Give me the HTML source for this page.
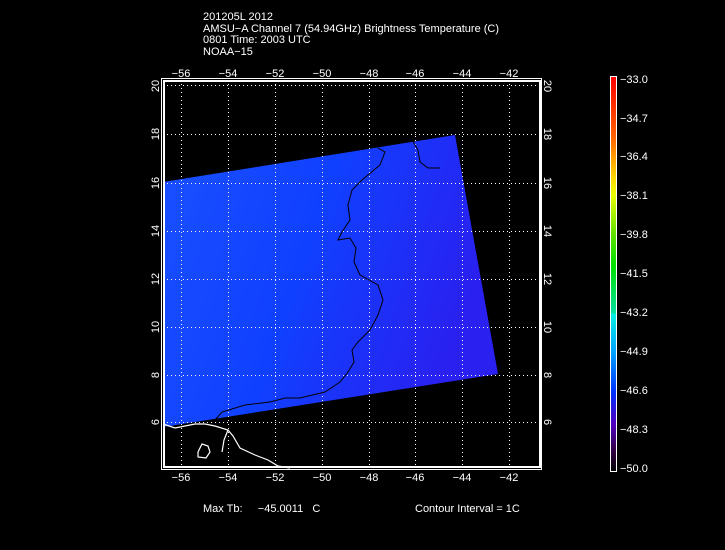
<!DOCTYPE html>
<html><head><style>
html,body{margin:0;padding:0;background:#000;}
body{width:725px;height:550px;position:relative;overflow:hidden;font-family:"Liberation Sans",sans-serif;color:#fff;}
.t{position:absolute;left:203px;font-size:11px;line-height:11px;white-space:pre;}
</style></head><body>
<div class="t" style="top:12px">201205L 2012</div>
<div class="t" style="top:23.5px">AMSU−A Channel 7 (54.94GHz) Brightness Temperature (C)</div>
<div class="t" style="top:35px">0801 Time: 2003 UTC</div>
<div class="t" style="top:46.5px">NOAA−15</div>
<svg width="725" height="550" style="position:absolute;left:0;top:0" font-family="Liberation Sans, sans-serif" font-size="11" fill="#fff">
<defs>
<linearGradient id="cb" x1="0" y1="0" x2="0" y2="1">
<stop offset="0" stop-color="#ff0000"/>
<stop offset="0.15" stop-color="#ff6000"/>
<stop offset="0.25" stop-color="#ffd000"/>
<stop offset="0.3" stop-color="#e8ff00"/>
<stop offset="0.4" stop-color="#60e000"/>
<stop offset="0.48" stop-color="#00e000"/>
<stop offset="0.6" stop-color="#00e0a0"/>
<stop offset="0.6" stop-color="#00f0e0"/>
<stop offset="0.7" stop-color="#00a0ff"/>
<stop offset="0.8" stop-color="#0030ff"/>
<stop offset="0.88" stop-color="#5000c0"/>
<stop offset="0.95" stop-color="#300040"/>
<stop offset="1" stop-color="#000000"/>
</linearGradient>
<linearGradient id="dg" x1="0" y1="0" x2="1" y2="0.3">
<stop offset="0" stop-color="#1a50ff"/>
<stop offset="0.5" stop-color="#1040ff"/>
<stop offset="1" stop-color="#2a20f0"/>
</linearGradient>
</defs>
<!-- data swath -->
<polygon points="163,182 455,135 498,374 163,427" fill="url(#dg)"/>
<!-- grid -->
<g stroke="#fff" stroke-width="1" stroke-dasharray="1,3">
<line x1="181.5" y1="80" x2="181.5" y2="468"/>
<line x1="228.5" y1="80" x2="228.5" y2="468"/>
<line x1="275.5" y1="80" x2="275.5" y2="468"/>
<line x1="322.5" y1="80" x2="322.5" y2="468"/>
<line x1="369.5" y1="80" x2="369.5" y2="468"/>
<line x1="415.5" y1="80" x2="415.5" y2="468"/>
<line x1="462.5" y1="80" x2="462.5" y2="468"/>
<line x1="509.5" y1="80" x2="509.5" y2="468"/>
<line x1="163" y1="85.5" x2="541" y2="85.5"/>
<line x1="163" y1="134.5" x2="541" y2="134.5"/>
<line x1="163" y1="183.5" x2="541" y2="183.5"/>
<line x1="163" y1="231.5" x2="541" y2="231.5"/>
<line x1="163" y1="279.5" x2="541" y2="279.5"/>
<line x1="163" y1="327.5" x2="541" y2="327.5"/>
<line x1="163" y1="375.5" x2="541" y2="375.5"/>
<line x1="163" y1="422.5" x2="541" y2="422.5"/>
</g>
<!-- coastline black -->
<g fill="none" stroke="#000" stroke-width="1">
<polyline points="378,148 385,152 380,165 362,180 352,190 348,205 350,220 342,232 338,240 350,238 356,248 354,262 360,275 378,285 383,300 378,315 370,330 358,342 352,350 354,362 348,372 340,382 325,392 300,398 285,398 270,402 245,405 222,412 215,420"/>
<polyline points="412,140 418,150 420,162 428,168 440,168"/>
</g>
<!-- coastline white -->
<g fill="none" stroke="#fff" stroke-width="1.2">
<polyline points="163,424 175,428 185,426 195,424 205,424 215,426 228,430 233,436 240,448 255,455 268,460 278,466 290,468"/>
<polyline points="228,430 224,440 222,452"/>
<path d="M198,452 l4,-8 l6,2 l2,6 l-4,6 l-8,-1 z"/>
</g>
<!-- frame -->
<rect x="161.5" y="78.5" width="380" height="391" fill="none" stroke="#fff" stroke-width="1"/>
<rect x="163" y="80" width="2" height="388" fill="#fff"/>
<rect x="163" y="466" width="378" height="2" fill="#fff"/>
<rect x="163" y="80" width="378" height="2" fill="#fff"/>
<rect x="539" y="80" width="2" height="388" fill="#fff"/>
<!-- top labels -->
<g text-anchor="middle">
<text x="181" y="77">−56</text><text x="228" y="77">−54</text><text x="275" y="77">−52</text><text x="322" y="77">−50</text><text x="369" y="77">−48</text><text x="415" y="77">−46</text><text x="462" y="77">−44</text><text x="509" y="77">−42</text>
<text x="181" y="481">−56</text><text x="228" y="481">−54</text><text x="275" y="481">−52</text><text x="322" y="481">−50</text><text x="369" y="481">−48</text><text x="415" y="481">−46</text><text x="462" y="481">−44</text><text x="509" y="481">−42</text>
</g>
<g text-anchor="middle">
<text transform="translate(159,86) rotate(-90)">20</text>
<text transform="translate(159,134) rotate(-90)">18</text>
<text transform="translate(159,183) rotate(-90)">16</text>
<text transform="translate(159,231) rotate(-90)">14</text>
<text transform="translate(159,279) rotate(-90)">12</text>
<text transform="translate(159,327) rotate(-90)">10</text>
<text transform="translate(159,375) rotate(-90)">8</text>
<text transform="translate(159,422) rotate(-90)">6</text>
<text transform="translate(544,86) rotate(90)">20</text>
<text transform="translate(544,134) rotate(90)">18</text>
<text transform="translate(544,183) rotate(90)">16</text>
<text transform="translate(544,231) rotate(90)">14</text>
<text transform="translate(544,279) rotate(90)">12</text>
<text transform="translate(544,327) rotate(90)">10</text>
<text transform="translate(544,375) rotate(90)">8</text>
<text transform="translate(544,422) rotate(90)">6</text>
</g>
<!-- colorbar -->
<rect x="610.5" y="76.5" width="6" height="395" fill="url(#cb)" stroke="#fff" stroke-width="1"/>
<g>
<text x="620" y="83">−33.0</text><text x="620" y="122">−34.7</text><text x="620" y="160">−36.4</text><text x="620" y="199">−38.1</text><text x="620" y="238">−39.8</text><text x="620" y="277">−41.5</text><text x="620" y="316">−43.2</text><text x="620" y="355">−44.9</text><text x="620" y="394">−46.6</text><text x="620" y="433">−48.3</text><text x="620" y="472">−50.0</text>
</g>
<text x="203" y="512" xml:space="preserve">Max Tb:     −45.0011   C</text>
<text x="415" y="512">Contour Interval = 1C</text>
</svg>
</body></html>
